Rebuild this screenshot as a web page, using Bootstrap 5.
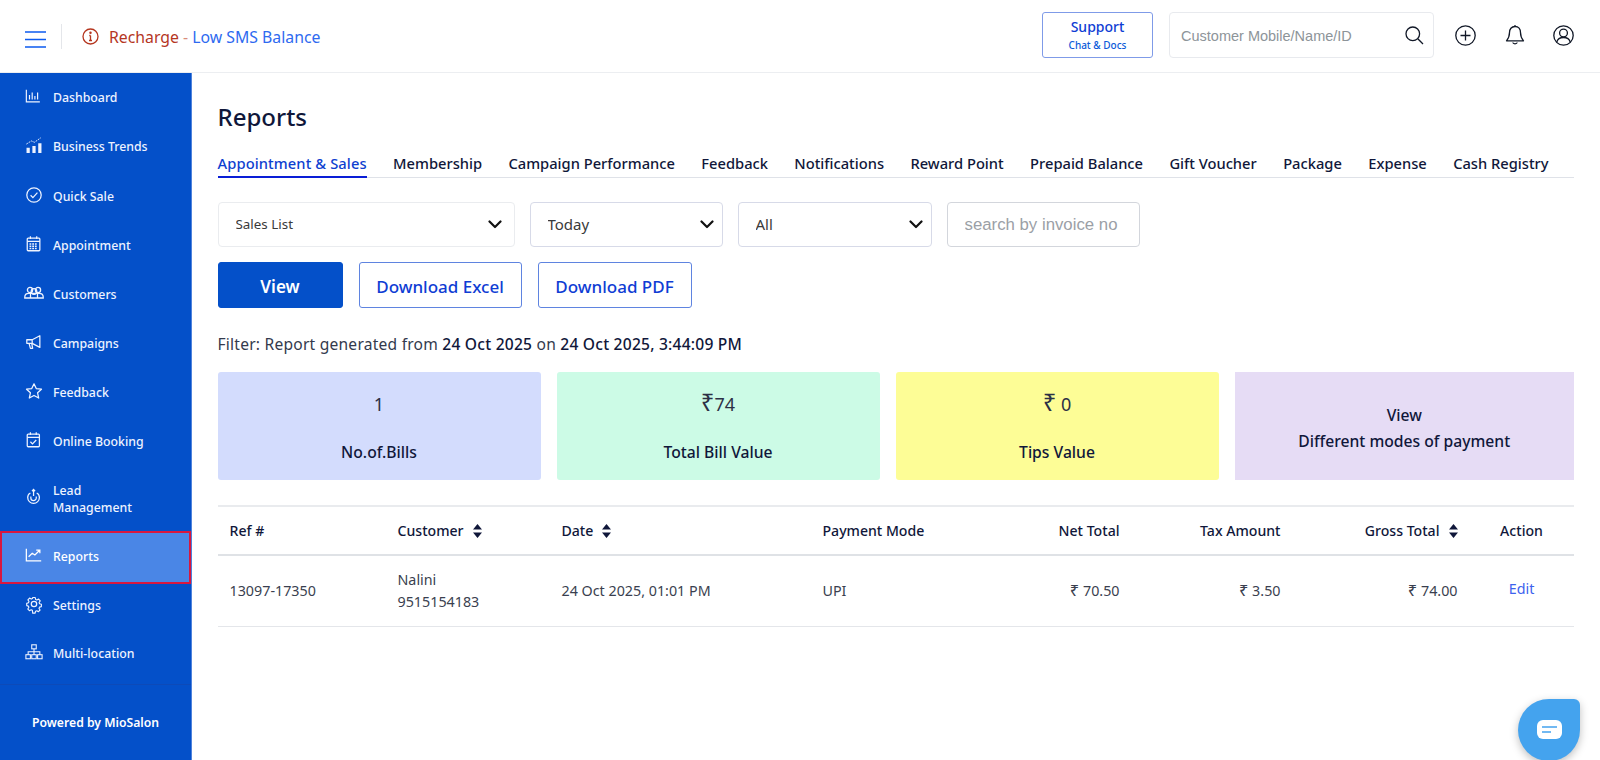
<!DOCTYPE html>
<html lang="en">
<head>
<meta charset="utf-8">
<title>Reports</title>
<link rel="stylesheet" href="https://cdn.jsdelivr.net/npm/bootstrap@5.3.0/dist/css/bootstrap.min.css">
<style>
html,body{height:760px;overflow:hidden}
body{font-family:"Noto Sans","Liberation Sans",sans-serif;color:#10173a;background:#fff}
.topbar{height:73px;border-bottom:1px solid #eceef1;padding:0 22px 0 25px}
.burger{width:21px;height:17px;color:#0d5bf0;margin-top:6px}
.vline{width:1px;height:25px;background:#e4e6ea;margin:0 20px 0 15px}
.info-ico{margin-top:1px}
.notice{font-size:15.8px;color:#b5361f;margin-top:3px;margin-left:2px}
.notice-link{color:#2e6af0}
.notice-dash{color:#d98c7a}
.top-right{margin-bottom:2px}
.btn-support{width:111px;height:46px;border:1px solid #7f9be8;border-radius:3px;color:#0f3dd4;font-size:14px;line-height:17px;font-weight:500;padding:2px 0 0;background:#fff}
.btn-support small{display:block;font-size:10px;line-height:20px;color:#0d5bd9;font-weight:500}
.searchbox{width:265px;height:46px;border:1px solid #e8eaee;border-radius:4px;margin-left:16px;padding:0 9px 0 11px}
.searchbox input{border:0;outline:0;flex:1;min-width:0;font:14.5px "Liberation Sans",Arial,sans-serif;color:#333;background:transparent;padding:2px 0 0}
.searchbox input::placeholder{color:#8d9499;opacity:1}
.top-ico{color:#111827;margin-left:20px;width:29px;height:29px;display:flex;align-items:center;justify-content:center}
.top-ico-first{margin-left:17px}
.sidemenu{width:192px;height:687px;background:#0450c9;flex:none;border-right:1px solid #4f83dc}
.side-item{display:flex;align-items:center;gap:10px;padding:16px 6px 16px 25px;color:#eef3ff;font-size:12.3px;line-height:17px;text-decoration:none;font-weight:500}
.side-item svg{width:18px;height:18px;flex:none;margin-top:-4px;overflow:visible}
.side-shift{margin-top:1px}
.side-lead{padding-bottom:15px}
.side-last{margin-top:-1px}
.side-active{background:#4a86e6;border:2px solid #d8173f;padding:15px 6px 17px 23px;margin-bottom:-3px;color:#fff;height:53px;width:191px}
.side-foot{position:absolute;left:0;top:684px;width:191px;border-top:1px solid #0d4ab8;text-align:center;color:#fff;font-size:12.2px;font-weight:600;padding-top:29px}
.main-area{flex:1;padding:0 26px 0 25.500px;min-width:0}
.page-title{font-size:24px;font-weight:500;line-height:32px;margin:28px 0 20px;color:#10173a}
.tabbar{display:flex;gap:26.400px;border-bottom:1px solid #dfe2e8;height:25px;margin-bottom:24px}
.tabbar a{font-size:14.7px;font-weight:500;line-height:20px;color:#10173a;text-decoration:none;white-space:nowrap;height:25px}
.tabbar a.tab-on{color:#0e3fd0;border-bottom:2px solid #0a1ed6;letter-spacing:.1px}
.filter-sel{height:45px;border:1px solid #d7dae8;border-radius:4px;font-size:15px;color:#3a3a3a;padding-left:17px;box-shadow:none;background-image:url("data:image/svg+xml,%3csvg xmlns='http://www.w3.org/2000/svg' viewBox='0 0 14 9'%3e%3cpath fill='none' stroke='%23111' stroke-width='2.200' stroke-linecap='round' stroke-linejoin='round' d='M1.500 1.500 7 7l5.500-5.500'/%3e%3c/svg%3e");background-size:14px 9px;background-position:right 8px center}
.sel-a{width:297px;font-size:13.4px;border-color:#eaecef;background-position:right 12px center}
.sel-b{width:193px;margin-left:15px}
.sel-c{width:194px;margin-left:15px}
.filter-inp{width:193px;height:45px;margin-left:15px;border:1px solid #d3d6dc;border-radius:4px;padding:0 0 0 17px;font:16.800px "Liberation Sans",Arial,sans-serif;outline:0}
.filter-inp::placeholder{color:#9b9fa6;opacity:1}
.act-row{margin-top:15px;gap:16px}
.btn-view,.btn-line{height:46px;border-radius:3px;font-size:17px;font-weight:500;padding:3px 0 0}
.btn-view{width:125px;background:#0450c9;border:1px solid #0450c9;color:#fff;font-weight:600}
.btn-line{background:#fff;border:1px solid #5f84e0;color:#0f3dd4}
.w-excel{width:163px}
.w-pdf{width:154px}
.filter-line{font-size:15.600px;letter-spacing:.22px;line-height:20px;margin:26px 0 18px;color:#333a4d}
.filter-line b{font-weight:500;color:#10173a}
.stat-row{display:flex;gap:16px}
.stat-box{height:108px;flex:0 0 323px;border-radius:3px;text-align:center;font-size:15.700px;font-weight:500;color:#10173a;padding-top:20px}
.stat-num{font-size:18px;line-height:24px;font-weight:400;color:#2c3045;margin-bottom:26px}
.big-rupee{font-size:24px;line-height:0}
.tbl-rupee{font-size:16.500px;line-height:0}
.stat-lab{line-height:20px}
.tone-a{background:#d3dcfd}.tone-b{background:#ccfbe6}.tone-c{background:#fdfd96}
.tone-d{background:#e6dcf5;flex:1;border-radius:0;padding-top:30px;line-height:26px}
.rpt-table{margin:25px 0 0;width:1356px;table-layout:fixed;border-top:2px solid #e9ebee;font-size:14.300px;color:#3a3f4f}
.rpt-table th{font-size:14.100px;font-weight:500;color:#10173a;height:49px;vertical-align:middle;padding:0 12px;border-bottom:2px solid #dfe2e6;white-space:nowrap}
.rpt-table td{height:71px;vertical-align:middle;padding:0 12px;border-bottom:1px solid #e4e6ea;line-height:22px;color:#3a3f4f}
.sorter{width:9px;height:14px;margin-left:9px;vertical-align:-2px;color:#10173a}
.c1{width:168px}.c2{width:164px}.c3{width:261px}.c4{width:175px}.c5{width:146px}.c6{width:161px}.c7{width:177px}.c8{width:104px}
.edit-link{color:#3d62ee;text-decoration:none;position:relative;top:-2px}
.chat-drop{position:fixed;left:1518px;top:699px;width:62px;height:62px;background:#44a3ee;border-radius:50% 6px 50% 50%;box-shadow:0 3px 8px rgba(0,0,0,.25);display:flex;align-items:center;justify-content:center}
</style>
</head>
<body>
<header class="topbar d-flex align-items-center">
  <svg class="burger" viewBox="0 0 21 17" fill="none" stroke="currentColor" stroke-width="1.5"><path d="M0 1h21M0 8.500h21M0 16h21"/></svg>
  <span class="vline"></span>
  <svg width="17" height="17" viewBox="0 0 17 17" fill="none" stroke="#b5361f" stroke-width="1.300" class="me-2 info-ico"><circle cx="8.500" cy="8.500" r="7.500"/><path d="M8.500 7.500v5M7 12.500h3M7.300 7.500h1.200" /><circle cx="8.500" cy="4.800" r=".6" fill="#b5361f"/></svg>
  <span class="notice">Recharge <span class="notice-dash">-</span> <span class="notice-link">Low SMS Balance</span></span>
  <div class="ms-auto d-flex align-items-center top-right">
    <button class="btn-support" type="button">Support<small>Chat &amp; Docs</small></button>
    <div class="searchbox d-flex align-items-center">
      <input type="text" placeholder="Customer Mobile/Name/ID">
      <svg width="19" height="19" viewBox="0 0 19 19" fill="none" stroke="#111827" stroke-width="1.300"><circle cx="7.800" cy="7.800" r="6.800"/><path d="M12.800 12.800 18 18"/></svg>
    </div>
    <span class="top-ico top-ico-first"><svg width="21" height="21" viewBox="0 0 21 21" fill="none" stroke="currentColor" stroke-width="1.300"><circle cx="10.500" cy="10.500" r="9.700"/><path d="M10.500 5.500v10M5.500 10.500h10"/></svg></span>
    <span class="top-ico"><svg width="20" height="22" viewBox="0 0 20 22" fill="none" stroke="currentColor" stroke-width="1.300" stroke-linejoin="round"><path d="M10 2.500c-3.600 0-5.500 2.700-5.500 6 0 4.500-1.300 6.300-3 8.300h17c-1.700-2-3-3.800-3-8.300 0-3.300-1.900-6-5.500-6zM10 2.500V1M7.800 18.500c.3 1.700 4.100 1.700 4.400 0"/></svg></span>
    <span class="top-ico"><svg width="21" height="21" viewBox="0 0 21 21" fill="none" stroke="currentColor" stroke-width="1.300"><circle cx="10.500" cy="10.500" r="9.700"/><circle cx="10.500" cy="8" r="3.900"/><path d="M3.800 17.200c.7-3.200 3.500-4.700 6.700-4.700s6 1.500 6.700 4.700"/></svg></span>
  </div>
</header>
<div class="d-flex">
  <nav class="sidemenu">
    <a class="side-item" href="#"><svg viewBox="0 0 20 20" fill="none" stroke="currentColor" stroke-width="1.300"><path d="M1.500 3v13.500h15M5 14V9M8 14V6M11 14v-4M14 14V6"/></svg>Dashboard</a>
    <a class="side-item" href="#"><svg viewBox="0 0 20 20" fill="none" stroke="currentColor"><path d="M3.500 19v-6M10 19v-8M16.500 19V8" stroke-width="3.600"/><path d="M1.500 9 7 5.500l3.500 1.500 7-5" stroke-width="1" stroke-dasharray="2 1"/></svg>Business Trends</a>
    <a class="side-item side-shift" href="#"><svg viewBox="0 0 20 20" fill="none" stroke="currentColor" stroke-width="1.400"><circle cx="10" cy="10" r="8"/><path d="m6.200 10.300 2.600 2.600 5-5.500"/></svg>Quick Sale</a>
    <a class="side-item" href="#"><svg viewBox="0 0 20 20" fill="none" stroke="currentColor" stroke-width="1.400"><rect x="2.500" y="3.500" width="14" height="14" rx="1"/><path d="M2.500 7h14M6 1.500v3M13 1.500v3"/><path d="M5 10h9M5 12.500h9M5 15h9" stroke-dasharray="2 1" stroke-width="1.600"/></svg>Appointment</a>
    <a class="side-item" href="#"><svg viewBox="1 1 18 18" fill="none" stroke="currentColor" stroke-width="1.300"><circle cx="6" cy="7" r="2.600"/><circle cx="14" cy="7" r="2.600"/><circle cx="10" cy="8.500" r="2.800"/><path d="M.8 14c0-2.500 1.500-3.600 4-3.600h10.400c2.500 0 4 1.100 4 3.600v1H.8zM6.500 11v4M13.500 11v4"/></svg>Customers</a>
    <a class="side-item" href="#"><svg viewBox="0 0 20 20" fill="none" stroke="currentColor" stroke-width="1.400" stroke-linejoin="round"><path d="M2 7.500h6L16.500 3v13L8 11.500H2zM4.500 11.500 6 17h2.500L7.500 11.500M8 7.500v4"/></svg>Campaigns</a>
    <a class="side-item" href="#"><svg viewBox="0 0 20 20" fill="none" stroke="currentColor" stroke-width="1.400" stroke-linejoin="round"><path d="m10 2 2.500 5.300 5.800.7-4.300 4 1.200 5.800L10 15l-5.200 2.800L6 12 1.700 8l5.800-.7z"/></svg>Feedback</a>
    <a class="side-item" href="#"><svg viewBox="0 0 20 20" fill="none" stroke="currentColor" stroke-width="1.400"><rect x="2.500" y="3.500" width="13.500" height="14" rx="1"/><path d="M2.500 7h13.500M6 1.500v3M12.500 1.500v3M6 12l2.300 2.300 4.200-4.300"/></svg>Online Booking</a>
    <a class="side-item side-lead" href="#"><svg viewBox="0 0 20 20" fill="none" stroke="currentColor" stroke-width="1.400"><path d="M6 5.500C3.800 6.500 3 8.300 3 10.500a6.500 6.500 0 0 0 13 0c0-2.200-.8-4-3-5M6.500 9.500v1.500a3 3 0 0 0 6 0V9.500M9.500 9V2M7.800 3.500l1.700-2 1.700 2"/></svg><span>Lead<br>Management</span></a>
    <a class="side-item side-active" href="#"><svg viewBox="0 0 20 20" fill="none" stroke="currentColor" stroke-width="1.400"><path d="M1.500 3v13.500H18M4 12l4-4 3 2 5-5M12.500 4.500H16.500v3.500"/></svg>Reports</a>
    <a class="side-item" href="#"><svg viewBox="0 0 20 20" fill="none" stroke="currentColor" stroke-width="1.400" stroke-linejoin="round"><circle cx="10" cy="10" r="3"/><path d="M8.500 2h3l.5 2.400 1.500.7 2.200-1.200 2 2.200-1.400 2 .6 1.600 2.200.7v2.800l-2.300.6-.6 1.600 1.300 2-2 2.100-2-1.200-1.600.6-.5 2.400h-3L8 17.800l-1.500-.7-2.100 1.200-2-2.100 1.300-2.100-.6-1.500L1 12V9.200l2.200-.7.600-1.600-1.300-2 2-2.200 2.100 1.200 1.500-.7z" transform="translate(1 1) scale(.9)"/></svg>Settings</a>
    <a class="side-item side-last" href="#"><svg viewBox="0 0 20 20" fill="none" stroke="currentColor" stroke-width="1.200"><rect x="7.500" y="2" width="5" height="4.500"/><rect x="1" y="13" width="5" height="4.500"/><rect x="7.500" y="13" width="5" height="4.500"/><rect x="14" y="13" width="5" height="4.500"/><path d="M10 6.500V13M3.500 13V9.800h13V13"/></svg>Multi-location</a>
    <div class="side-foot">Powered by MioSalon</div>
  </nav>
  <main class="main-area">
    <h1 class="page-title">Reports</h1>
    <div class="tabbar">
      <a class="tab-on" href="#">Appointment &amp; Sales</a><a href="#">Membership</a><a href="#">Campaign Performance</a><a href="#">Feedback</a><a href="#">Notifications</a><a href="#">Reward Point</a><a href="#">Prepaid Balance</a><a href="#">Gift Voucher</a><a href="#">Package</a><a href="#">Expense</a><a href="#">Cash Registry</a>
    </div>
    <div class="d-flex">
      <select class="form-select filter-sel sel-a"><option>Sales List</option></select>
      <select class="form-select filter-sel sel-b"><option>Today</option></select>
      <select class="form-select filter-sel sel-c"><option>All</option></select>
      <input class="filter-inp" type="text" placeholder="search by invoice no">
    </div>
    <div class="d-flex act-row">
      <button class="btn btn-view" type="button">View</button>
      <button class="btn btn-line w-excel" type="button">Download Excel</button>
      <button class="btn btn-line w-pdf" type="button">Download PDF</button>
    </div>
    <p class="filter-line">Filter: Report generated from <b>24 Oct 2025</b> on <b>24 Oct 2025, 3:44:09 PM</b></p>
    <div class="stat-row">
      <div class="stat-box tone-a"><div class="stat-num">1</div><div class="stat-lab">No.of.Bills</div></div>
      <div class="stat-box tone-b"><div class="stat-num"><span class="big-rupee">₹</span>74</div><div class="stat-lab">Total Bill Value</div></div>
      <div class="stat-box tone-c"><div class="stat-num"><span class="big-rupee">₹</span> 0</div><div class="stat-lab">Tips Value</div></div>
      <div class="stat-box tone-d">View<br>Different modes of payment</div>
    </div>
    <table class="table rpt-table">
      <colgroup><col class="c1"><col class="c2"><col class="c3"><col class="c4"><col class="c5"><col class="c6"><col class="c7"><col class="c8"></colgroup>
      <thead>
        <tr>
          <th>Ref #</th>
          <th>Customer<svg class="sorter" viewBox="0 0 9 14" fill="currentColor"><path d="M4.500 0 9 5.500H0zM4.500 14 0 8.500h9z"/></svg></th>
          <th>Date<svg class="sorter" viewBox="0 0 9 14" fill="currentColor"><path d="M4.500 0 9 5.500H0zM4.500 14 0 8.500h9z"/></svg></th>
          <th>Payment Mode</th>
          <th class="text-end">Net Total</th>
          <th class="text-end">Tax Amount</th>
          <th class="text-end">Gross Total<svg class="sorter" viewBox="0 0 9 14" fill="currentColor"><path d="M4.500 0 9 5.500H0zM4.500 14 0 8.500h9z"/></svg></th>
          <th class="text-center">Action</th>
        </tr>
      </thead>
      <tbody>
        <tr>
          <td>13097-17350</td>
          <td>Nalini<br>9515154183</td>
          <td>24 Oct 2025, 01:01 PM</td>
          <td>UPI</td>
          <td class="text-end"><span class="tbl-rupee">₹</span> 70.50</td>
          <td class="text-end"><span class="tbl-rupee">₹</span> 3.50</td>
          <td class="text-end"><span class="tbl-rupee">₹</span> 74.00</td>
          <td class="text-center"><a class="edit-link" href="#">Edit</a></td>
        </tr>
      </tbody>
    </table>
  </main>
</div>
<div class="chat-drop"><svg width="25" height="20" viewBox="0 0 25 20"><rect x="0" y="0" width="25" height="19" rx="6" fill="#fff"/><path d="M5 7h15M5 12h9" stroke="#44a3ee" stroke-width="1.600"/></svg></div>
<script src="https://cdn.jsdelivr.net/npm/bootstrap@5.3.0/dist/js/bootstrap.bundle.min.js"></script>
</body>
</html>
